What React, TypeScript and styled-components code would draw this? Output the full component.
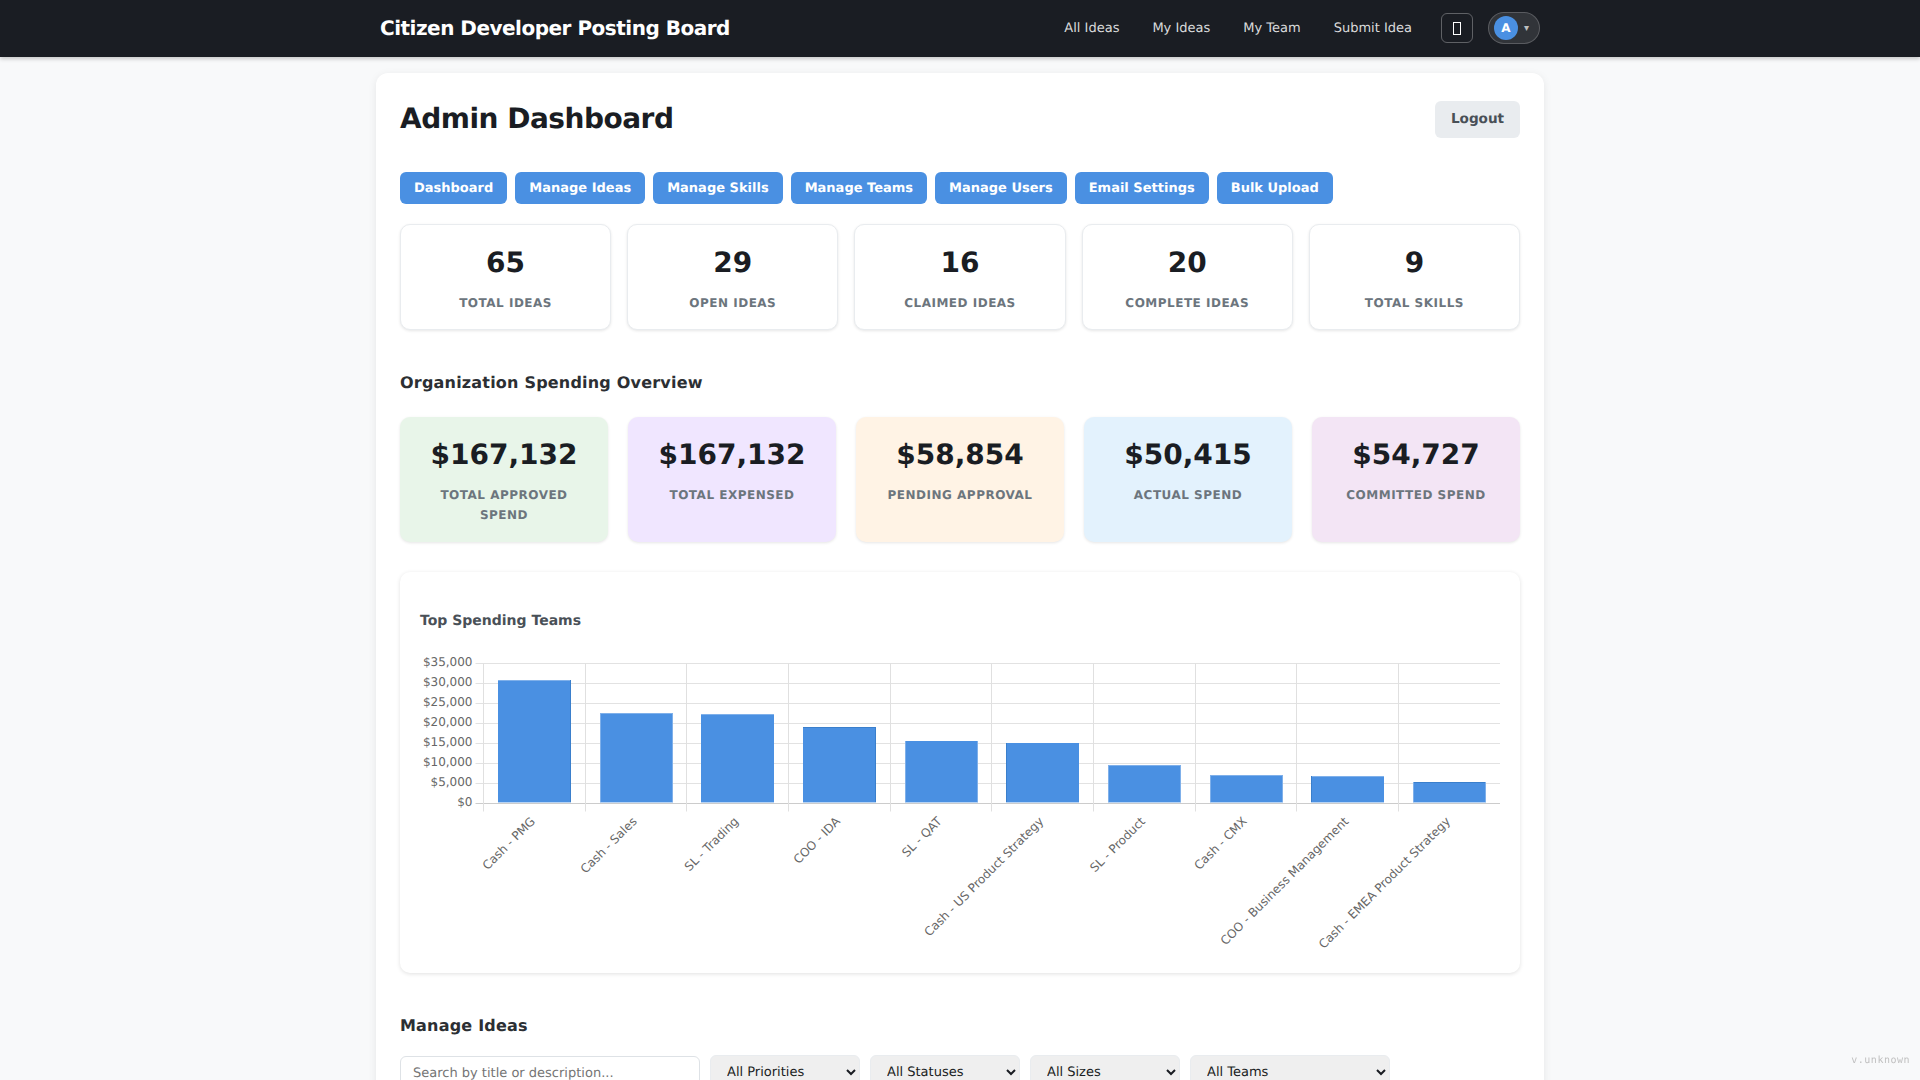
import styled, { createGlobalStyle } from "styled-components";

const GlobalStyle = createGlobalStyle`
  html, body {
    margin: 0;
    height: 100%;
    overflow: hidden;
    background: #f8f9fa;
  }
  * {
    box-sizing: border-box;
  }
  body {
    font-family: "DejaVu Sans", sans-serif;
    color: #1a1d23;
    text-rendering: geometricPrecision;
  }
`;

const NavBar = styled.nav`
  height: 57px;
  padding-bottom: 1px;
  background: #1a1d23;
  box-shadow: 0 2px 4px rgba(0, 0, 0, 0.2);
  position: relative;
`;
const NavInner = styled.div`
  max-width: 1200px;
  height: 100%;
  margin: 0 auto;
  padding: 0 20px;
  display: flex;
  align-items: center;
  justify-content: space-between;
`;
const Brand = styled.div`
  color: #fff;
  font-size: 20px;
  font-weight: 700;
  letter-spacing: -0.5px;
`;
const NavLinks = styled.div`
  display: flex;
  align-items: center;
`;
const NavLink = styled.a`
  color: rgba(255, 255, 255, 0.85);
  font-size: 13px;
  margin-right: 33px;
  &:last-of-type {
    margin-right: 29px;
  }
`;
const ThemeToggle = styled.button`
  width: 32px;
  height: 30px;
  margin-right: 15px;
  padding: 0;
  display: flex;
  align-items: center;
  justify-content: center;
  background: transparent;
  border: 1px solid rgba(255, 255, 255, 0.3);
  border-radius: 6px;
`;
// the toggle's glyph has no font on the page, it shows as an empty box
const MissingGlyph = styled.span`
  width: 8px;
  height: 13px;
  border: 1px solid #fff;
`;
const ProfilePill = styled.div`
  width: 52px;
  height: 32px;
  padding: 0 0 0 5px;
  display: flex;
  align-items: center;
  gap: 6px;
  background: rgba(255, 255, 255, 0.1);
  border: 1px solid rgba(255, 255, 255, 0.2);
  border-radius: 16px;
`;
const Avatar = styled.span`
  width: 24px;
  height: 24px;
  border-radius: 50%;
  background: #4a90e2;
  color: #fff;
  font-size: 12px;
  font-weight: 700;
  display: flex;
  align-items: center;
  justify-content: center;
`;
const Caret = styled.span`
  color: rgba(255, 255, 255, 0.7);
  font-size: 10px;
`;

const Page = styled.main`
  max-width: 1200px;
  margin: 0 auto;
  padding: 16px;
`;
const Card = styled.div`
  background: #fff;
  border-radius: 12px;
  padding: 24px;
  box-shadow: 0 2px 8px rgba(0, 0, 0, 0.08);
`;
const HeaderRow = styled.div`
  display: flex;
  align-items: center;
  justify-content: space-between;
  margin-top: 4px;
  margin-bottom: 34px;
`;
const Title = styled.h1`
  margin: 0 0 2px;
  font-size: 28px;
  font-weight: 700;
  letter-spacing: -0.5px;
  color: #1a1d23;
`;
const LogoutButton = styled.button`
  height: 37px;
  width: 85px;
  padding: 0 0 1px;
  border: none;
  border-radius: 6px;
  background: #e9ecef;
  color: #495057;
  font-family: inherit;
  font-size: 13.6px;
  font-weight: 700;
  text-rendering: inherit;
`;
const Tabs = styled.div`
  display: flex;
  gap: 8px;
  margin-bottom: 20px;
`;
const TabButton = styled.button`
  height: 32px;
  padding: 0 14px;
  border: none;
  border-radius: 6px;
  background: #4a90e2;
  color: #fff;
  font-family: inherit;
  font-size: 13px;
  font-weight: 700;
  text-rendering: inherit;
`;
const StatGrid = styled.div`
  display: grid;
  grid-template-columns: repeat(5, 1fr);
  gap: 16px;
  margin-bottom: 43px;
`;
const StatCard = styled.div`
  height: 106px;
  padding-top: 21px;
  text-align: center;
  background: #fff;
  border: 1px solid #e9ecef;
  border-radius: 10px;
  box-shadow: 0 1px 3px rgba(0, 0, 0, 0.1);
`;
const StatValue = styled.div`
  font-size: 28px;
  font-weight: 700;
  line-height: 34px;
  color: #1a1d23;
`;
const StatLabel = styled.div`
  margin-top: 13px;
  font-size: 12px;
  font-weight: 700;
  line-height: 20px;
  letter-spacing: 0.5px;
  text-transform: uppercase;
  color: #6c757d;
`;
const SectionTitle = styled.h2<{ $after: number }>`
  margin: 0 0 ${(p) => p.$after}px;
  font-size: 16px;
  font-weight: 700;
  line-height: 20px;
  letter-spacing: 0.2px;
  color: #2c2f33;
`;
const SpendGrid = styled.div`
  display: grid;
  grid-template-columns: repeat(5, 1fr);
  gap: 20px;
  margin-bottom: 30px;
`;
const SpendCard = styled.div<{ $tint: string }>`
  height: 125px;
  padding: 21px 16px 0;
  text-align: center;
  background: ${(p) => p.$tint};
  border-radius: 10px;
  box-shadow: 0 1px 3px rgba(0, 0, 0, 0.1);
`;
const ChartCard = styled.div`
  height: 401px;
  padding: 41px 20px 0;
  background: #fff;
  border-radius: 10px;
  box-shadow: 0 1px 4px rgba(0, 0, 0, 0.12);
  margin-bottom: 43px;
`;
const ChartTitle = styled.h3`
  margin: 0 0 17px;
  font-size: 14px;
  font-weight: 700;
  line-height: 17px;
  color: #495057;
`;
const ChartSvg = styled.svg`
  display: block;
  font-family: "DejaVu Sans", sans-serif;
  font-size: 12px;
`;
const FilterRow = styled.div`
  display: flex;
  align-items: flex-start;
  gap: 10px;
`;
const SearchInput = styled.input`
  width: 300px;
  height: 34px;
  margin-top: 1px;
  padding: 0 12px;
  border: 1px solid #dee2e6;
  border-radius: 6px;
  font-family: inherit;
  font-size: 13px;
  text-rendering: inherit;
  &::placeholder {
    color: #757575;
  }
`;
const FilterSelect = styled.select<{ $wide?: boolean }>`
  width: ${(p) => (p.$wide ? 200 : 150)}px;
  height: 35px;
  padding: 0 12px;
  border: 1px solid #e9ecef;
  border-radius: 6px;
  background-color: #efefef;
  color: #1a1d23;
  font-family: inherit;
  font-size: 13px;
  text-rendering: inherit;
`;
const Version = styled.div`
  position: fixed;
  right: 10px;
  bottom: 14px;
  font-family: "DejaVu Sans Mono", monospace;
  font-size: 10px;
  letter-spacing: 0.5px;
  color: #c0c0c0;
`;

const stats = [
  { value: "65", label: "Total Ideas" },
  { value: "29", label: "Open Ideas" },
  { value: "16", label: "Claimed Ideas" },
  { value: "20", label: "Complete Ideas" },
  { value: "9", label: "Total Skills" },
];

const spending = [
  { value: "$167,132", label: "Total Approved Spend", tint: "#e8f5e9" },
  { value: "$167,132", label: "Total Expensed", tint: "#f0e6ff" },
  { value: "$58,854", label: "Pending Approval", tint: "#fff3e5" },
  { value: "$50,415", label: "Actual Spend", tint: "#e3f2fd" },
  { value: "$54,727", label: "Committed Spend", tint: "#f3e5f5" },
];

const tabs = [
  "Dashboard",
  "Manage Ideas",
  "Manage Skills",
  "Manage Teams",
  "Manage Users",
  "Email Settings",
  "Bulk Upload",
];

const LIGHT = "#7fb0ea";
const DARK = "#3a7fcc";

// edge colours: the canvas chart's bar borders land between pixels, so each side differs
const teams = [
  { name: "Cash - PMG", amount: 30750, top: LIGHT, left: "", right: DARK },
  { name: "Cash - Sales", amount: 22425, top: LIGHT, left: LIGHT, right: LIGHT },
  { name: "SL - Trading", amount: 22175, top: LIGHT, left: "", right: "" },
  { name: "COO - IDA", amount: 19000, top: DARK, left: "", right: DARK },
  { name: "SL - QAT", amount: 15500, top: "", left: LIGHT, right: LIGHT },
  { name: "Cash - US Product Strategy", amount: 15000, top: "", left: DARK, right: "" },
  { name: "SL - Product", amount: 9500, top: LIGHT, left: LIGHT, right: LIGHT },
  { name: "Cash - CMX", amount: 6925, top: LIGHT, left: LIGHT, right: LIGHT },
  { name: "COO - Business Management", amount: 6675, top: LIGHT, left: DARK, right: "" },
  { name: "Cash - EMEA Product Strategy", amount: 5175, top: DARK, left: LIGHT, right: LIGHT },
];

// the svg starts at x=420 in the page, the first grid line is at 483.5
const plotLeft = 63.5;
const plotTop = 16.5;
const stepX = 101.67;
const stepY = 20;
const ticks = [35000, 30000, 25000, 20000, 15000, 10000, 5000, 0];

function SpendingChart() {
  const bottom = plotTop + stepY * 7;
  const right = 1080;
  return (
    <ChartSvg width={1080} height={320}>
      {ticks.map((t, i) => {
        const y = plotTop + i * stepY;
        return (
          <g key={t}>
            <line
              x1={plotLeft - 8}
              x2={right}
              y1={y}
              y2={y}
              stroke={t === 0 ? "#cccccc" : "#e2e2e2"}
            />
            <text x={plotLeft - 11} y={y - 1} dy="0.3em" textAnchor="end" fill="#666">
              {"$" + t.toLocaleString("en-US")}
            </text>
          </g>
        );
      })}
      {teams.map((_, i) => {
        const x = Math.floor(plotLeft + i * stepX) + 0.5;
        return (
          <line key={i} x1={x} x2={x} y1={plotTop} y2={bottom + 8} stroke="#e0e0e0" />
        );
      })}
      {teams.map((team, i) => {
        const x = Math.round(78 + i * stepX);
        const y = Math.round(bottom - (team.amount / 35000) * (stepY * 7)) - 1;
        const h = Math.floor(bottom) - y;
        return (
          <g key={team.name} shapeRendering="crispEdges">
            <rect x={x} y={y} width={73} height={h} fill="#4a90e2" />
            {team.top && <rect x={x} y={y} width={73} height={1} fill={team.top} />}
            {team.left && <rect x={x} y={y} width={1} height={h} fill={team.left} />}
            {team.right && <rect x={x + 72} y={y} width={1} height={h} fill={team.right} />}
            <rect x={x} y={y + h - 1} width={73} height={1} fill="#b7d3f3" />
          </g>
        );
      })}
      {teams.map((team, i) => {
        const cx = plotLeft + (i + 0.5) * stepX;
        return (
          <text
            key={team.name}
            transform={`translate(${cx - 1} ${bottom + 16}) rotate(-45)`}
            dy="0.3em"
            textAnchor="end"
            fill="#666"
          >
            {team.name}
          </text>
        );
      })}
    </ChartSvg>
  );
}

export default function App() {
  return (
    <>
      <GlobalStyle />
      <NavBar>
        <NavInner>
          <Brand>Citizen Developer Posting Board</Brand>
          <NavLinks>
            <NavLink>All Ideas</NavLink>
            <NavLink>My Ideas</NavLink>
            <NavLink>My Team</NavLink>
            <NavLink>Submit Idea</NavLink>
            <ThemeToggle>
              <MissingGlyph />
            </ThemeToggle>
            <ProfilePill>
              <Avatar>A</Avatar>
              <Caret>▾</Caret>
            </ProfilePill>
          </NavLinks>
        </NavInner>
      </NavBar>
      <Page>
        <Card>
          <HeaderRow>
            <Title>Admin Dashboard</Title>
            <LogoutButton>Logout</LogoutButton>
          </HeaderRow>
          <Tabs>
            {tabs.map((t) => (
              <TabButton key={t}>{t}</TabButton>
            ))}
          </Tabs>
          <StatGrid>
            {stats.map((s) => (
              <StatCard key={s.label}>
                <StatValue>{s.value}</StatValue>
                <StatLabel>{s.label}</StatLabel>
              </StatCard>
            ))}
          </StatGrid>
          <SectionTitle $after={24}>Organization Spending Overview</SectionTitle>
          <SpendGrid>
            {spending.map((s) => (
              <SpendCard key={s.tint} $tint={s.tint}>
                <StatValue>{s.value}</StatValue>
                <StatLabel>{s.label}</StatLabel>
              </SpendCard>
            ))}
          </SpendGrid>
          <ChartCard>
            <ChartTitle>Top Spending Teams</ChartTitle>
            <SpendingChart />
          </ChartCard>
          <SectionTitle $after={19}>Manage Ideas</SectionTitle>
          <FilterRow>
            <SearchInput placeholder="Search by title or description..." />
            <FilterSelect>
              <option>All Priorities</option>
            </FilterSelect>
            <FilterSelect>
              <option>All Statuses</option>
            </FilterSelect>
            <FilterSelect>
              <option>All Sizes</option>
            </FilterSelect>
            <FilterSelect $wide>
              <option>All Teams</option>
            </FilterSelect>
          </FilterRow>
        </Card>
      </Page>
      <Version>v.unknown</Version>
    </>
  );
}
